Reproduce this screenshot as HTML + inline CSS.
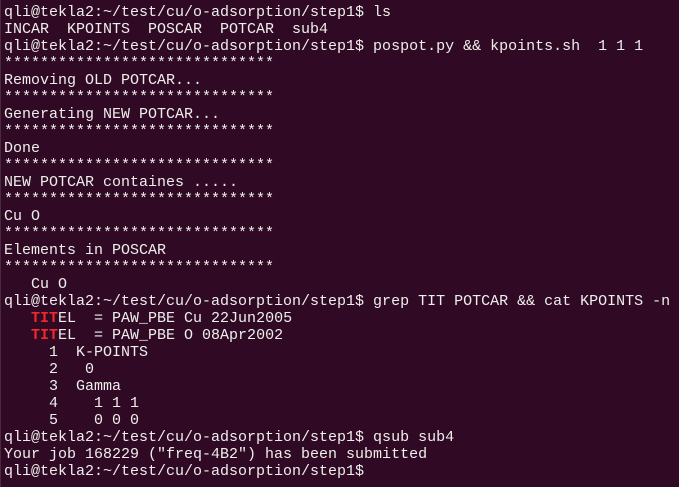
<!DOCTYPE html>
<html><head><meta charset="utf-8"><style>
html,body{margin:0;padding:0;background:#300a24;width:679px;height:467px;overflow:hidden}
.t{position:absolute;left:0;top:-13.5px;padding-left:3px;border-left:1px solid #4a2a40;font-family:"Liberation Mono",monospace;font-size:15px;line-height:17px;color:#eeeeec;white-space:pre;letter-spacing:0px;height:500px}
.r{color:#ef2929;font-weight:bold}
</style></head><body><div class="t">
qli@tekla2:~/test/cu/o-adsorption/step1$ ls
INCAR  KPOINTS  POSCAR  POTCAR  sub4
qli@tekla2:~/test/cu/o-adsorption/step1$ pospot.py &amp;&amp; kpoints.sh  1 1 1
******************************
Removing OLD POTCAR...
******************************
Generating NEW POTCAR...
******************************
Done
******************************
NEW POTCAR containes .....
******************************
Cu O
******************************
Elements in POSCAR
******************************
   Cu O
qli@tekla2:~/test/cu/o-adsorption/step1$ grep TIT POTCAR &amp;&amp; cat KPOINTS -n
   <span class="r">TIT</span>EL  = PAW_PBE Cu 22Jun2005
   <span class="r">TIT</span>EL  = PAW_PBE O 08Apr2002
     1  K-POINTS
     2   0
     3  Gamma
     4    1 1 1
     5    0 0 0
qli@tekla2:~/test/cu/o-adsorption/step1$ qsub sub4
Your job 168229 ("freq-4B2") has been submitted
qli@tekla2:~/test/cu/o-adsorption/step1$ 
</div></body></html>
